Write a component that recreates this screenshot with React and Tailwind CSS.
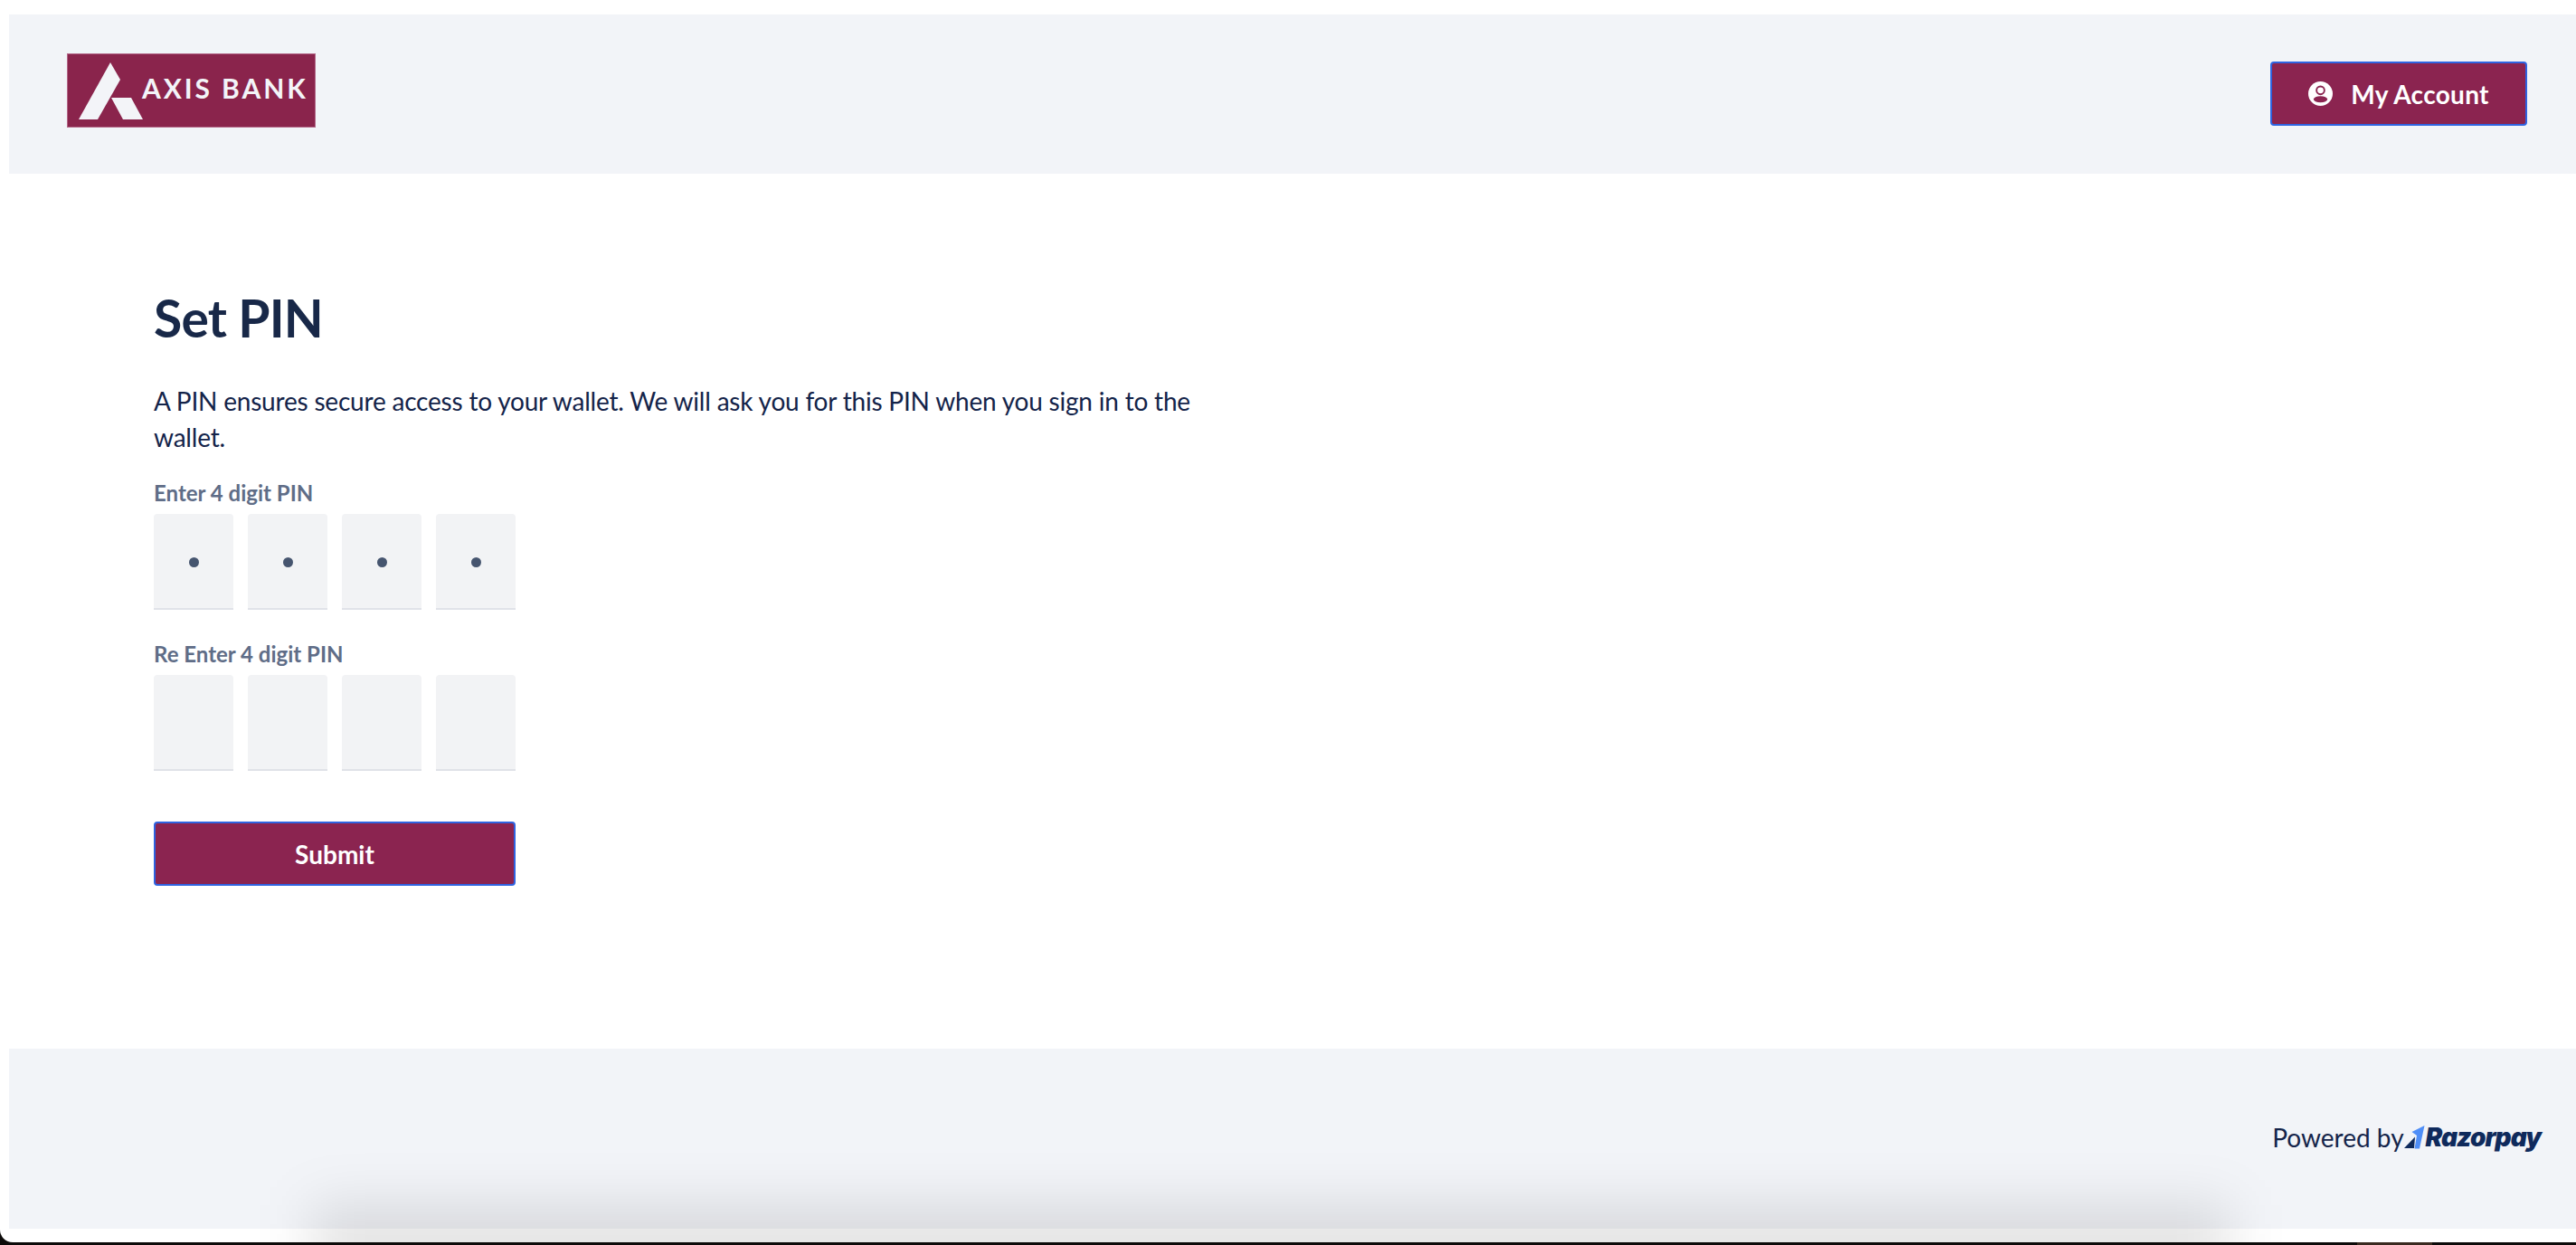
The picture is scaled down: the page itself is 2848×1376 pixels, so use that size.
import React from "react";

const font = { fontFamily: '"Lato", "Noto Sans", sans-serif' };

function AxisLogo() {
  return (
    <div className="flex h-[82px] w-[275px] items-start bg-[#8a244c] border border-[#b4698a]">
      <svg width="90" height="80" viewBox="0 0 90 80" className="shrink-0">
        <polygon points="47,9 58,28 33,72 12,72" fill="#f3f4f8" />
        <polygon points="48,48 70,48 83,72 61,72" fill="#f3f4f8" />
      </svg>
      <span className="ml-[-8px] mt-[19px] text-[30px] leading-[36px] font-bold tracking-[2.9px] text-[#f3f4f8] whitespace-nowrap">
        AXIS BANK
      </span>
    </div>
  );
}

function AccountIcon() {
  return (
    <svg width="27" height="27" viewBox="0 0 26 26" className="shrink-0">
      <circle cx="13" cy="13" r="13" fill="#ffffff" />
      <circle cx="13" cy="9.5" r="4.2" fill="#ffffff" stroke="#8b2450" strokeWidth="1.8" />
      <ellipse cx="13" cy="19" rx="7.4" ry="3.4" fill="#8b2450" />
    </svg>
  );
}

function RazorpayMark() {
  return (
    <svg width="24" height="26" viewBox="0 0 24 26" className="shrink-0">
      <polygon points="0,25 12,12.5 11,25" fill="#0f2a5c" />
      <polygon points="22.5,0 8.5,7 14,11 11.5,25.5 17,25.5" fill="#4f8ef7" />
    </svg>
  );
}

function PinBox({ filled }) {
  return (
    <div className="flex h-[106px] w-[88px] items-center justify-center rounded-t-[4px] border-b-2 border-[#e0e2e8] bg-[#f2f3f5]">
      {filled && <span className="mt-[2px] h-[11px] w-[11px] rounded-full bg-[#46556f]" />}
    </div>
  );
}

function PinRow({ filled }) {
  return (
    <div className="flex gap-4">
      <PinBox filled={filled} />
      <PinBox filled={filled} />
      <PinBox filled={filled} />
      <PinBox filled={filled} />
    </div>
  );
}

export default function App() {
  return (
    <div style={font} className="relative flex h-[1376px] w-[2848px] flex-col overflow-hidden bg-[#0d0b0a]">
      <div className="flex h-[1373px] flex-col rounded-bl-[14px] bg-white pl-[10px] pt-4 pb-[15px]">
        <header className="flex h-[176px] shrink-0 items-start justify-between bg-[#f2f4f8] pl-[64px] pr-[54px]">
          <div className="mt-[43px]">
            <AxisLogo />
          </div>
          <button className="mt-[52px] flex h-[71px] w-[284px] items-center justify-center gap-[20px] rounded-[4px] border-2 border-[#2f63e0] bg-[#8b2450] text-[28px] font-bold tracking-[0.3px] text-white">
            <AccountIcon />
            <span>My Account</span>
          </button>
        </header>

        <main className="flex-1 pl-[160px] pt-[125px]">
          <h1 className="text-[57px] leading-[68px] font-bold tracking-[-0.8px] text-[#182848]">Set PIN</h1>
          <p className="mt-[38px] w-[1180px] text-[28px] leading-[40px] tracking-[-0.2px] text-[#14244a]">
            A PIN ensures secure access to your wallet. We will ask you for this PIN when you sign in to the wallet.
          </p>
          <label className="mt-[27px] mb-[8px] block text-[24px] leading-[30px] font-bold text-[#5f6d87]">Enter 4 digit PIN</label>
          <PinRow filled />
          <label className="mt-[34px] mb-[8px] block text-[24px] leading-[30px] font-bold text-[#5f6d87]">Re Enter 4 digit PIN</label>
          <PinRow />
          <button className="mt-[56px] block h-[71px] w-[400px] rounded-[4px] border-2 border-[#2f63e0] bg-[#8b2450] text-[28px] font-bold text-white">
            Submit
          </button>
        </main>

        <footer className="flex h-[199px] shrink-0 items-start justify-end bg-[#f2f4f8] pr-[39px] pt-[78px]">
          <div className="flex items-center text-[28px] leading-[40px] text-[#14244a]">
            <span>Powered by</span>
            <RazorpayMark />
            <span className="text-[28px] font-black italic tracking-[-1px] text-[#0f2a5c]" style={{ fontFamily: '"Inter", sans-serif' }}>Razorpay</span>
          </div>
        </footer>
      </div>

      <div className="pointer-events-none absolute bottom-[-40px] left-[345px] h-[84px] w-[2120px] bg-[#000000]/[0.11] blur-[30px]" />
      <div className="absolute bottom-0 left-0 h-[3px] w-full bg-[#0d0b0a]" />
      <div className="absolute bottom-0 left-[2606px] h-[3px] w-[83px] bg-[#3a2a20]" />
    </div>
  );
}
